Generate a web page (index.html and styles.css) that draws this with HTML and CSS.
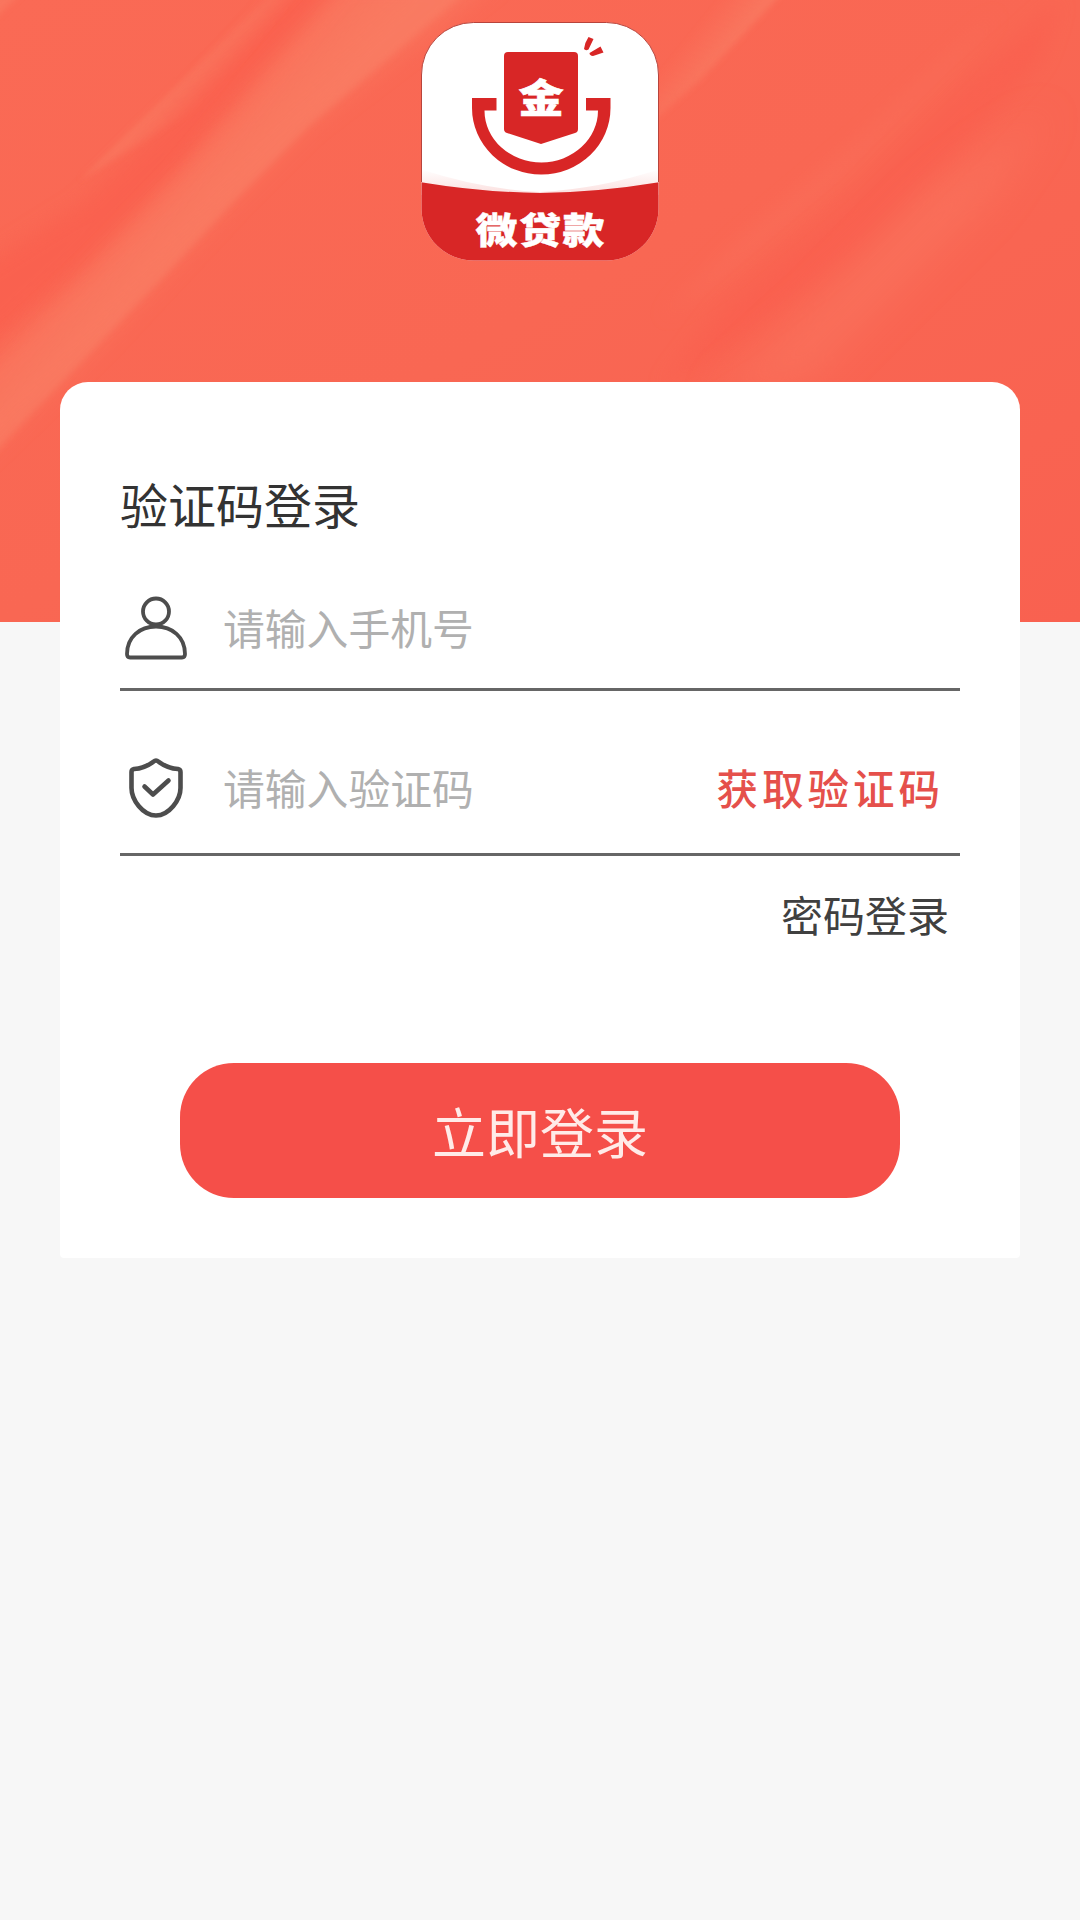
FILE: index.html
```html
<!DOCTYPE html>
<html lang="zh-CN">
<head>
<meta charset="utf-8">
<title>验证码登录</title>
<link rel="stylesheet" href="styles.css">
</head>
<body>
<main class="page">
  <header class="hero">
    <svg class="hero-art" viewBox="0 0 1080 622" preserveAspectRatio="none" aria-hidden="true">
      <defs>
        <linearGradient id="base" x1="0" y1="0" x2="1" y2="1">
          <stop offset="0" stop-color="#fa6a55"/>
          <stop offset=".5" stop-color="#f96753"/>
          <stop offset="1" stop-color="#f96150"/>
        </linearGradient>
        <linearGradient id="beamMain" gradientUnits="userSpaceOnUse" x1="190" y1="149" x2="240" y2="195">
          <stop offset="0" stop-color="#f98066" stop-opacity="0"/>
          <stop offset=".6" stop-color="#f98066" stop-opacity=".7"/>
          <stop offset="1" stop-color="#f98066"/>
        </linearGradient>
        <linearGradient id="beamTop" gradientUnits="userSpaceOnUse" x1="676" y1="52" x2="718" y2="86">
          <stop offset="0" stop-color="#f98066" stop-opacity="0"/>
          <stop offset="1" stop-color="#f98066"/>
        </linearGradient>
        <linearGradient id="beamThin" gradientUnits="userSpaceOnUse" x1="186" y1="70" x2="212" y2="94">
          <stop offset="0" stop-color="#f98066" stop-opacity=".9"/>
          <stop offset="1" stop-color="#f98066" stop-opacity="0"/>
        </linearGradient>
        <filter id="wide" x="-20%" y="-20%" width="140%" height="140%"><feGaussianBlur stdDeviation="18"/></filter>
        <filter id="soft" x="-20%" y="-20%" width="140%" height="140%"><feGaussianBlur stdDeviation="10"/></filter>
        <filter id="fine" x="-20%" y="-20%" width="140%" height="140%"><feGaussianBlur stdDeviation="3"/></filter>
      </defs>
      <rect width="1080" height="622" fill="url(#base)"/>
      <path d="M300-20 350-20 250 80 180 165 80 265-40 370-40 280 80 205 160 130Z" fill="#fa5c4c" opacity=".55" filter="url(#soft)"/>
      <path d="M340-20 500-20 310 125 235 200 165 275 100 345-40 480-40 390 90 270 180 175 240 105Z" fill="#f97d63" opacity=".5" filter="url(#soft)"/>
      <path d="M480-20 390 57 310 125 235 200 165 275 100 342 30 415-40 490-40 330 90 220 180 130 330-20Z" fill="url(#beamMain)" opacity=".6" filter="url(#fine)"/>
      <path d="M275-10 190 73 130 130 80 180 210 100 310-10Z" fill="url(#beamThin)" opacity=".6" filter="url(#fine)"/>
      <path d="M-20-10 25-10-20 32Z" fill="#f98066" opacity=".5" filter="url(#fine)"/>
      <path d="M785-10 700 80 640 133 560 170 700-10Z" fill="url(#beamTop)" opacity=".85" filter="url(#fine)"/>
      <path d="M1060 0 1040 60 960 150 860 250 740 340 660 390 720 310 850 200 960 90Z" fill="#fa5a4b" opacity=".4" filter="url(#soft)"/>
      <path d="M1000 10 960 60 840 180 720 280 660 320 740 240 860 140Z" fill="#fa7660" opacity=".4" filter="url(#soft)"/>
      <path d="M1050 110 990 200 900 290 810 380 710 400 820 300 930 190Z" fill="#fa7862" opacity=".5" filter="url(#wide)"/>
    </svg>
    <svg class="logo" viewBox="0 0 240 240" role="img" aria-label="微贷款">
      <defs>
        <clipPath id="tile"><rect x="1.500" y="1.500" width="237" height="238" rx="52"/></clipPath>
        <linearGradient id="shade" x1="0" y1="0" x2="0" y2="1"><stop offset="0" stop-color="#fff"/><stop offset="1" stop-color="#fbdedd"/></linearGradient>
      </defs>
      <g clip-path="url(#tile)">
        <rect width="240" height="240" fill="#fff"/>
        <path d="M0 148Q60 168 120 171Q180 168 240 148V174H0Z" fill="url(#shade)"/>
        <path d="M0 161Q60 171 120 172Q180 171 240 161V240H0Z" fill="#d82626"/>
      </g>
      <path d="M1.500 161V54A52 52 0 0 1 53.500 1.500H186.500A52 52 0 0 1 238.500 54V161" fill="none" stroke="#b8443c"/>
      <path d="M52 77H76.500V89.500H64.500A57 52 0 0 0 121.500 141.500A57 52 0 0 0 178 89.500H166V77H190.500V87A69 66.500 0 0 1 121.500 153.500A69 66.500 0 0 1 52 87Z" fill="#d82626"/>
      <path d="M88 31H154Q158 31 158 35V108Q158 111 155 112L121 123 87 112Q84 111 84 108V35Q84 31 88 31Z" fill="#d82626"/>
      <path d="M168.500 16 173.500 18 168.500 28.500Q165.500 30 164 28Q164.500 22 168.500 16ZM169.500 32 180.500 25.500 183.500 31.500 173 35Q169.500 34.500 169.500 32Z" fill="#d82626"/>
      <text transform="translate(121 91) scale(1.22 1.03)" class="logo-mark">金</text>
      <text transform="translate(120 223) scale(1 .86)" class="logo-name" textLength="129">微贷款</text>
    </svg>
  </header>
  <form class="card">
    <h1 class="title">验证码登录</h1>
    <label class="field field-phone">
      <svg class="icon" viewBox="0 0 72 72" aria-hidden="true"><circle cx="36" cy="20.500" r="13"/><path d="M7 63C7 46 20 35.500 36 35.500S65 46 65 63Q65 66.500 62 66.500H10Q7 66.500 7 63Z"/></svg>
      <input class="input" type="text" placeholder="请输入手机号">
    </label>
    <div class="field field-code">
      <svg class="icon shield" viewBox="0 0 72 72" aria-hidden="true"><path d="M36 10.500C39 10.500 43 18 58 19Q60.500 19.500 60.500 22V38C60.500 50 49 65.500 36 65.500S11.500 50 11.500 38V22Q11.500 19.500 14 19C29 18 33 10.500 36 10.500Z"/><path d="M24.500 36.500 33 44.500 48.500 30.500"/></svg>
      <input class="input" type="text" placeholder="请输入验证码">
      <button class="get-code" type="button">获取验证码</button>
    </div>
    <a class="switch">密码登录</a>
    <button class="submit" type="button">立即登录</button>
  </form>
</main>
</body>
</html>
```
FILE: styles.css
```css
* { box-sizing: border-box; }
body {
  margin: 0;
  background: #f7f7f7;
  font-family: "Noto Sans CJK SC", sans-serif;
}
.page { min-height: 1920px; }
.hero {
  display: grid;
  justify-items: center;
  height: 622px;
  overflow: hidden;
}
.hero-art { grid-area: 1 / 1; width: 1080px; height: 622px; }
.logo { grid-area: 1 / 1; width: 240px; height: 240px; margin-top: 21px; z-index: 1; }
.logo-mark, .logo-name { fill: #fff; font-weight: 900; text-anchor: middle; stroke: #fff; }
.logo-mark { font-size: 37px; stroke-width: .6px; }
.logo-name { font-size: 42px; stroke-width: .5px; }
.card {
  position: relative;
  display: flex;
  flex-direction: column;
  width: 960px;
  height: 876px;
  margin: -240px auto 0;
  padding: 85px 60px 60px;
  background: #fff;
  border-radius: 28px 28px 4px 4px;
}
.title { margin: 0; color: #333; font-size: 48px; font-weight: 400; line-height: 72px; }
.field {
  display: flex;
  align-items: center;
  border-bottom: 3px solid #666;
}
.field-phone { height: 118px; margin-top: 34px; padding-bottom: 7px; }
.field-code { height: 165px; padding-top: 33px; padding-bottom: 6px; }
.icon {
  flex: none;
  width: 72px;
  height: 72px;
  fill: none;
  stroke: #4d4d4d;
  stroke-width: 3.8;
  stroke-linecap: round;
  stroke-linejoin: round;
}
.shield { stroke-width: 4.6; }
.input {
  flex: 1;
  min-width: 0;
  height: 72px;
  margin-left: 31px;
  padding: 0;
  border: 0;
  background: none;
  color: #333;
  font: 400 41.8px/60px "Noto Sans CJK SC", sans-serif;
}
.field-code .input { padding-top: 2px; }
.input::placeholder { color: #b0b0b0; opacity: 1; }
.get-code {
  margin-right: 16px;
  padding: 2px 0 0;
  border: 0;
  background: none;
  color: #e5504b;
  font: 500 41.5px/60px "Noto Sans CJK SC", sans-serif;
  letter-spacing: 4px;
}
.switch { align-self: flex-end; margin: 26px 11px 0 0; color: #404040; font-size: 42px; font-weight: 400; line-height: 64px; }
.submit {
  width: 720px;
  height: 135px;
  margin: auto auto 0;
  padding: 1px 0 0;
  border: 0;
  border-radius: 54px;
  background: #f54f49;
  color: #ffebe8;
  font: 400 54px/80px "Noto Sans CJK SC", sans-serif;
}
```
